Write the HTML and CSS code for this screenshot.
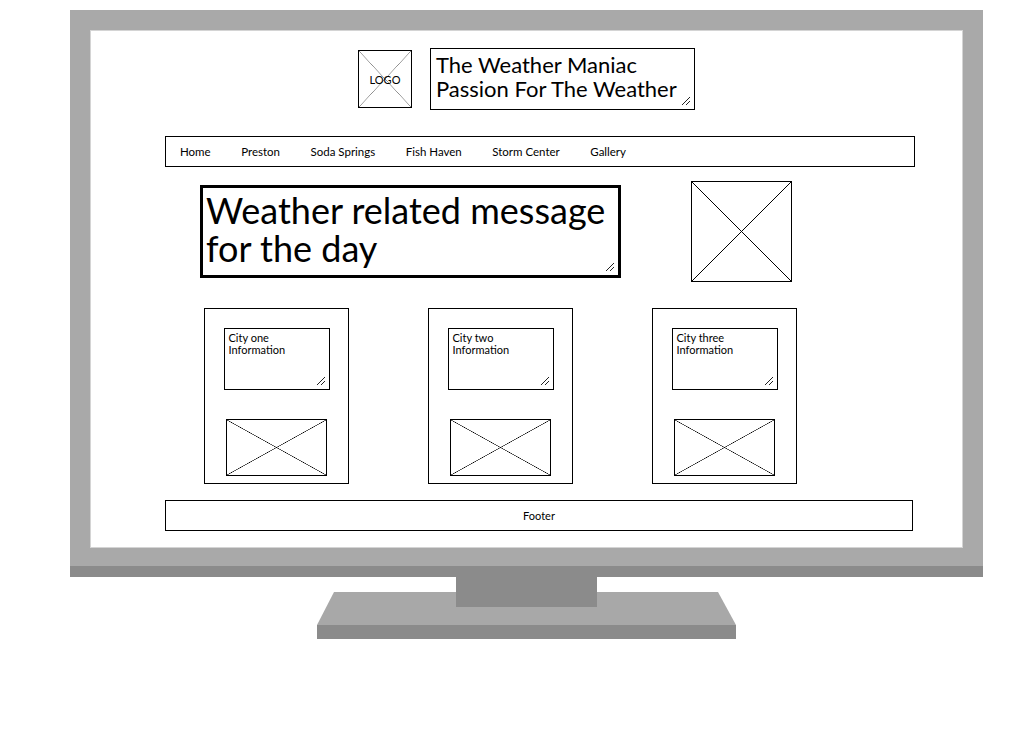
FILE: index.html
```html
<!DOCTYPE html>
<html lang="en">
<head>
  <meta charset="UTF-8">
  <meta name="viewport" content="width=device-width, initial-scale=1.0">
  <title>The Weather Maniac - Wireframe</title>
  <link rel="stylesheet" href="styles.css">
</head>
<body>
  <div class="monitor">
    <div class="bezel">
      <div class="screen">

        <!-- header: logo + site title -->
        <div class="header">
          <div class="logo placeholder">LOGO</div>
          <div class="title textbox">
            <div>The Weather Maniac</div>
            <div>Passion For The Weather</div>
            <svg class="grip" width="8" height="8" viewBox="0 0 8 8"><path d="M0 8L8 0M4 8L8 4" stroke="#222" stroke-width="1"/></svg>
          </div>
        </div>

        <nav class="nav">
          <span>Home</span>
          <span>Preston</span>
          <span>Soda Springs</span>
          <span>Fish Haven</span>
          <span>Storm Center</span>
          <span>Gallery</span>
        </nav>

        <div class="hero">
          <div class="message textbox">
            Weather related message<br>for the day
            <svg class="grip" width="8" height="8" viewBox="0 0 8 8"><path d="M0 8L8 0M4 8L8 4" stroke="#222" stroke-width="1"/></svg>
          </div>
          <div class="hero-img placeholder"></div>
        </div>

        <div class="cards">
          <div class="card">
            <div class="city textbox">
              City one<br>Information
              <svg class="grip" width="8" height="8" viewBox="0 0 8 8"><path d="M0 8L8 0M4 8L8 4" stroke="#222" stroke-width="1"/></svg>
            </div>
            <div class="city-img placeholder"></div>
          </div>
          <div class="card">
            <div class="city textbox">
              City two<br>Information
              <svg class="grip" width="8" height="8" viewBox="0 0 8 8"><path d="M0 8L8 0M4 8L8 4" stroke="#222" stroke-width="1"/></svg>
            </div>
            <div class="city-img placeholder"></div>
          </div>
          <div class="card">
            <div class="city textbox">
              City three<br>Information
              <svg class="grip" width="8" height="8" viewBox="0 0 8 8"><path d="M0 8L8 0M4 8L8 4" stroke="#222" stroke-width="1"/></svg>
            </div>
            <div class="city-img placeholder"></div>
          </div>
        </div>

        <div class="footer">Footer</div>

      </div>
    </div>
    <div class="bezel-edge"></div>
  </div>

  <!-- monitor stand -->
  <svg class="stand" width="420" height="62" viewBox="0 0 420 62">
    <polygon points="17,15 401,15 419,48 0,48" fill="#a8a8a8"/>
    <rect x="0" y="48" width="419" height="14" fill="#8b8b8b"/>
    <rect x="139" y="0" width="141" height="30" fill="#8b8b8b"/>
  </svg>
</body>
</html>
```

FILE: styles.css
```css
body {
  margin: 0;
  background-color: #ffffff;
  font-family: Lato, "Noto Sans", sans-serif;
  color: #000;
}
.monitor {
  width: 913px;
  margin: 10px 0 0 70px;
}
.bezel {
  background-color: #a9a9a9;
  padding: 20px 20px 18px 20px;
}
.bezel-edge {
  height: 11px;
  background-color: #8b8b8b;
}
.screen {
  box-sizing: border-box;
  height: 518px;
  background-color: #fff;
  border: 1px solid #d4d4d4;
  overflow: hidden;
}
.stand {
  display: block;
  margin-left: 317px;
}

/* wireframe pieces */
.placeholder {
  box-sizing: border-box;
  border: 1px solid #000;
  background:
    linear-gradient(to top right, transparent calc(50% - 0.6px), #000 50%, transparent calc(50% + 0.6px)),
    linear-gradient(to bottom right, transparent calc(50% - 0.6px), #000 50%, transparent calc(50% + 0.6px));
}
.textbox {
  box-sizing: border-box;
  position: relative;
  border: 1px solid #000;
  background: #fff;
}
.grip {
  position: absolute;
  right: 4px;
  bottom: 4px;
}

.header {
  display: flex;
  justify-content: center;
  align-items: center;
  gap: 18px;
  margin-top: 17px;
}
.logo {
  width: 54px;
  height: 58px;
  display: flex;
  align-items: center;
  justify-content: center;
  font-size: 11px;
  background:
    linear-gradient(to top right, transparent calc(50% - 0.6px), #888 50%, transparent calc(50% + 0.6px)),
    linear-gradient(to bottom right, transparent calc(50% - 0.6px), #888 50%, transparent calc(50% + 0.6px));
}
.title {
  width: 265px;
  height: 62px;
  padding: 4px 5px;
  font-size: 22px;
  line-height: 24px;
}

.nav {
  box-sizing: border-box;
  display: flex;
  align-items: center;
  gap: 30.5px;
  width: 750px;
  height: 31px;
  margin: 26px 0 0 74px;
  padding-left: 14px;
  border: 1px solid #000;
  font-size: 11.5px;
}

.hero {
  display: flex;
  align-items: center;
  margin: 14px 0 0 109px;
}
.message {
  width: 421px;
  height: 93px;
  border: 3px solid #000;
  padding: 3px 3px;
  font-size: 36px;
  line-height: 38px;
}
.hero-img {
  width: 101px;
  height: 101px;
  margin-left: 70px;
}

.cards {
  display: flex;
  gap: 79px;
  margin: 26px 0 0 113px;
}
.card {
  box-sizing: border-box;
  display: flex;
  flex-direction: column;
  align-items: center;
  width: 145px;
  height: 176px;
  padding-top: 19px;
  border: 1px solid #000;
}
.city {
  width: 106px;
  height: 62px;
  padding: 3px 4px;
  font-size: 11px;
  line-height: 12px;
}
.city-img {
  width: 101px;
  height: 57px;
  margin-top: 29px;
}

.footer {
  box-sizing: border-box;
  display: flex;
  align-items: center;
  justify-content: center;
  width: 748px;
  height: 31px;
  margin: 16px 0 0 74px;
  border: 1px solid #000;
  font-size: 11px;
}
```
